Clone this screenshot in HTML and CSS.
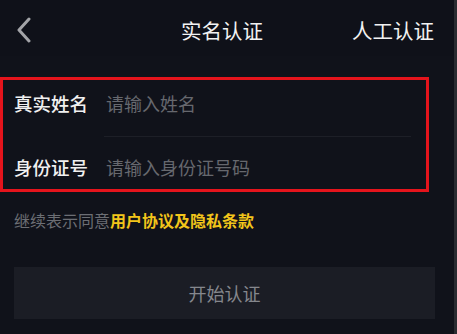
FILE: index.html
```html
<!DOCTYPE html>
<html lang="zh">
<head>
<meta charset="utf-8">
<link rel="stylesheet" href="styles.css">
</head>
<body>
<div class="page">
  <header class="topbar">
    <svg class="back" width="16" height="26" viewBox="0 0 16 26"><polyline points="13,2 3,13 13,24" fill="none" stroke="#a3a4a8" stroke-width="3" stroke-linecap="round" stroke-linejoin="round"/></svg>
    <div class="title">实名认证</div>
    <div class="manual">人工认证</div>
  </header>
  <section class="form">
    <div class="row row1">
      <span class="label">真实姓名</span>
      <span class="ph">请输入姓名</span>
    </div>
    <div class="divider"></div>
    <div class="row row2">
      <span class="label">身份证号</span>
      <span class="ph">请输入身份证号码</span>
    </div>
  </section>
  <p class="agree">继续表示同意<b>用户协议及隐私条款</b></p>
  <div class="btn">开始认证</div>
  <div class="edge"></div>
</div>
</body>
</html>
```
FILE: styles.css
```css
html, body {
  margin: 0;
  padding: 0;
  background: #10121a;
  width: 457px;
  height: 334px;
  overflow: hidden;
}
.page {
  position: relative;
  width: 457px;
  height: 334px;
  font-family: "Noto Sans CJK SC", "Noto Sans", sans-serif;
  display: flex;
  flex-direction: column;
}
.topbar {
  height: 56px;
  display: grid;
  grid-template-columns: 1fr auto 1fr;
  align-items: center;
  padding: 0 23px 0 16px;
  background: #0f1119;
}
.back { display: block; margin-top: 4px; }
.title {
  color: #f2f2f2;
  font-size: 20.5px;
  line-height: 28px;
  margin-top: 3px;
  margin-left: -6px;
}
.manual {
  justify-self: end;
  color: #f2f2f2;
  font-size: 20.5px;
  line-height: 28px;
  margin-top: 3px;
}
.form {
  margin-top: 21px;
  width: 423px;
  border: 3px solid #e5141c;
  display: flex;
  flex-direction: column;
}
.row {
  display: flex;
  align-items: center;
  padding-left: 11px;
}
.row1 { height: 46px; margin-bottom: 10px; }
.row2 { height: 44px; padding-top: 8px; }
.label {
  width: 92px;
  color: #f0f0f0;
  font-size: 18.5px;
  font-weight: 500;
}
.ph {
  color: #66686e;
  font-size: 18px;
}
.divider {
  height: 1px;
  background: #1d1f27;
  margin: 0 15px 0 101px;
}
.agree {
  margin: 17px 0 0 14px;
  color: #6c6e74;
  font-size: 16px;
  line-height: 22px;
}
.agree b {
  color: #f2c51a;
  font-weight: 700;
}
.btn {
  margin: 36px 0 0 14px;
  width: 421px;
  height: 52px;
  background: #1b1d25;
  color: #85878d;
  font-size: 18px;
  display: flex;
  align-items: center;
  justify-content: center;
}
.edge {
  position: absolute;
  top: 0;
  right: 0;
  width: 3px;
  height: 334px;
  background: #2a2c31;
}
```
